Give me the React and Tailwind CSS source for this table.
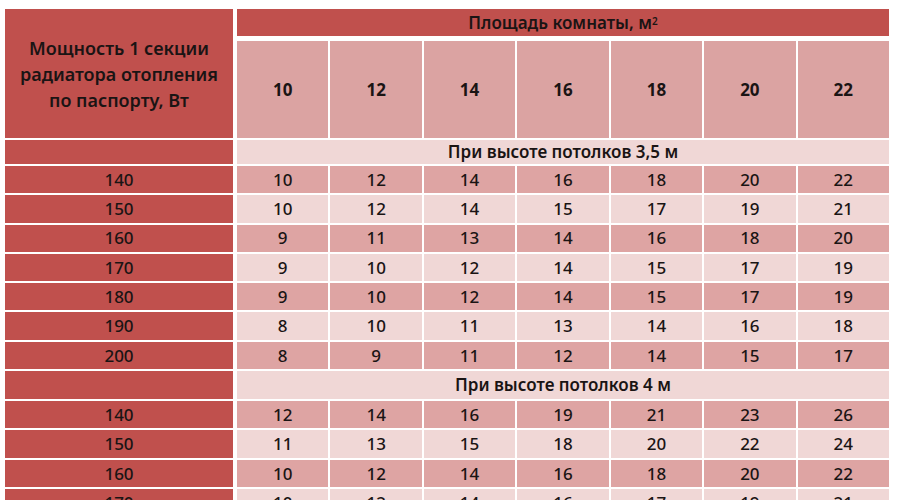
import React from 'react';

const AREAS = [10, 12, 14, 16, 18, 20, 22];

const SECTIONS = [
  {
    title: 'При высоте потолков 3,5 м',
    height: 'h-[24px]',
    rows: [
      [140, 10, 12, 14, 16, 18, 20, 22],
      [150, 10, 12, 14, 15, 17, 19, 21],
      [160, 9, 11, 13, 14, 16, 18, 20],
      [170, 9, 10, 12, 14, 15, 17, 19],
      [180, 9, 10, 12, 14, 15, 17, 19],
      [190, 8, 10, 11, 13, 14, 16, 18],
      [200, 8, 9, 11, 12, 14, 15, 17],
    ],
  },
  {
    title: 'При высоте потолков 4 м',
    height: 'h-[28px]',
    rows: [
      [140, 12, 14, 16, 19, 21, 23, 26],
      [150, 11, 13, 15, 18, 20, 22, 24],
      [160, 10, 12, 14, 16, 18, 20, 22],
      [170, 10, 12, 14, 16, 17, 19, 21],
    ],
  },
];

const font = { fontFamily: '"Noto Sans", "Open Sans", sans-serif' };

export default function App() {
  return (
    <div className="w-[900px] h-[500px] overflow-hidden bg-white pl-[5px] pt-[9px] text-[#1a1414]" style={font}>
      <div className="w-[884px] flex flex-col gap-y-[2px]">
        {/* Header */}
        <div className="flex gap-x-[4px]">
          <div className="w-[228px] h-[129px] bg-[#c0504d] flex items-center justify-center text-center text-[18px] leading-[26px] font-semibold">
            <span>
              Мощность 1 секции
              <br />
              радиатора отопления
              <br />
              по паспорту, Вт
            </span>
          </div>
          <div className="flex-1 flex flex-col gap-y-[5px]">
            <div className="h-[27px] bg-[#c0504d] flex items-center justify-center text-[17px] font-semibold">
              Площадь комнаты, м<sup className="text-[10px] relative -top-[2px]">2</sup>
            </div>
            <div className="grid grid-cols-7 gap-x-[2px] h-[97px]">
              {AREAS.map((a) => (
                <div key={a} className="bg-[#dba3a2] flex items-center justify-center text-[17px] font-bold">
                  {a}
                </div>
              ))}
            </div>
          </div>
        </div>

        {SECTIONS.map((section) => (
          <React.Fragment key={section.title}>
            {/* Section title row */}
            <div className="flex gap-x-[4px]">
              <div className={`w-[228px] bg-[#c0504d] ${section.height}`} />
              <div className={`flex-1 bg-[#f0d7d6] flex items-center justify-center text-[17px] font-semibold ${section.height}`}>
                {section.title}
              </div>
            </div>

            {section.rows.map((row, i) => (
              <div key={row[0]} className="flex gap-x-[4px] h-[27.3px]">
                <div className="w-[228px] bg-[#c0504d] flex items-center justify-center text-[17px] font-medium">
                  {row[0]}
                </div>
                <div className="flex-1 grid grid-cols-7 gap-x-[2px]">
                  {row.slice(1).map((v, j) => (
                    <div
                      key={j}
                      className={`flex items-center justify-center text-[17px] font-medium ${
                        i % 2 === 0 ? 'bg-[#dea4a3]' : 'bg-[#f0d7d6]'
                      }`}
                    >
                      {v}
                    </div>
                  ))}
                </div>
              </div>
            ))}
          </React.Fragment>
        ))}
      </div>
    </div>
  );
}
